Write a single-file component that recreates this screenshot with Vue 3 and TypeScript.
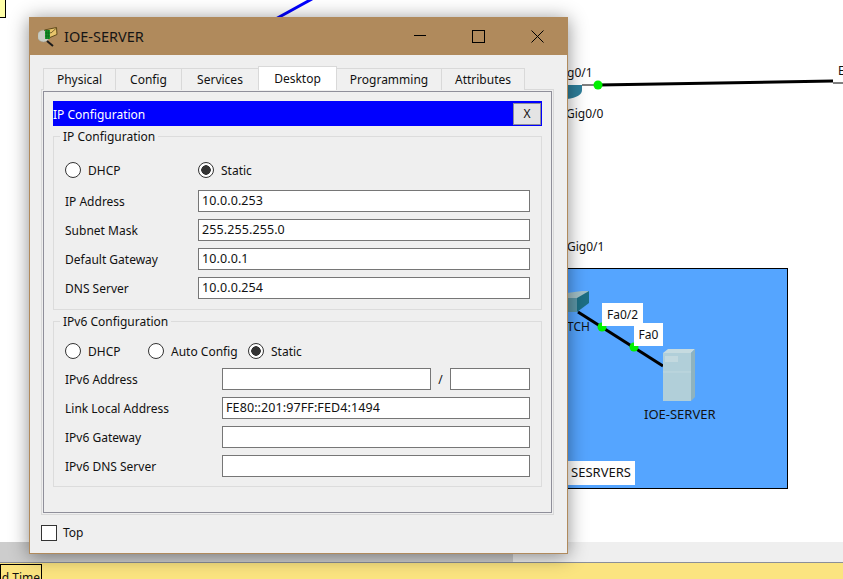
<template>
  <div class="desktop">
    <!-- packet tracer workspace behind the dialog -->
    <div class="note"></div>
    <svg class="links" width="843" height="579">
      <line x1="272" y1="21" x2="312" y2="-1" stroke="#0000ff" stroke-width="3" />
      <path d="M567 85 H582 V90 Q582 97 567 99 Z" fill="#2e7f9b" />
      <line x1="582" y1="85" x2="598" y2="85" stroke="#000" stroke-width="1" />
      <line x1="598" y1="85" x2="833" y2="81" stroke="#000" stroke-width="3" />
      <line x1="833" y1="83" x2="843" y2="83" stroke="#000" stroke-width="1" />
      <circle cx="598" cy="85" r="4.5" fill="#00f000" />
    </svg>
    <span class="canvas-text" style="left: 567px; top: 66px">g0/1</span>
    <span class="canvas-text" style="left: 566px; top: 107px">Gig0/0</span>
    <span class="canvas-text" style="left: 838px; top: 64px">E</span>
    <span class="canvas-text" style="left: 567px; top: 240px">Gig0/1</span>

    <div class="cluster"></div>
    <svg class="links" width="843" height="579">
      <path d="M567 293 L582 291 L589 291 L582 298 L567 298 Z" fill="#a3c0c6" />
      <path d="M567 298 H577 V312 H567 Z" fill="#5d96a6" />
      <path d="M577 298 L589 291 V303 L577 312 Z" fill="#1d6f84" />
      <line x1="578" y1="312" x2="663" y2="366" stroke="#000" stroke-width="3" />
      <circle cx="602" cy="327" r="4.5" fill="#00f000" />
      <circle cx="634" cy="347" r="4.5" fill="#00f000" />
      <path d="M663 353 L668 349 H695 L691 353 Z" fill="#c6dbe0" />
      <path d="M691 353 L695 349 V397 L691 401 Z" fill="#8fb3bf" />
      <rect x="663" y="353" width="28" height="48" fill="#b1cfd9" />
      <rect x="665" y="356" width="13" height="6" fill="#c3d9df" />
      <line x1="663" y1="372" x2="691" y2="372" stroke="#c0d8df" />
    </svg>
    <span class="canvas-text" style="left: 567px; top: 320px">TCH</span>
    <span class="canvas-text tag" style="left: 602px; top: 303px; width: 41px">Fa0/2</span>
    <span class="canvas-text tag" style="left: 634px; top: 323px; width: 29px">Fa0</span>
    <span class="canvas-text wide" style="left: 644px; top: 407px">IOE-SERVER</span>
    <span class="canvas-text tag wide" style="left: 567px; top: 461px; width: 68px; height: 24px">SESRVERS</span>

    <div class="scroll-track"><div class="scroll-thumb"></div></div>
    <div class="status">
      <div class="time-box">d Time</div>
    </div>

    <!-- device dialog -->
    <div class="window">
      <div class="titlebar">
        <svg class="app-icon" width="22" height="22" viewBox="0 0 22 22">
          <circle cx="5.500" cy="11" r="6" fill="#c9cdc4" stroke="#9a9a90" stroke-width="0.5" />
          <path d="M6.500 5 L18.500 2.500 L19 9.500 L12 12.500 Z" fill="#e8c56c" stroke="#5f4a1a" stroke-width="1" />
          <path d="M7 5.500 L13 8 L18.500 3" fill="none" stroke="#5f4a1a" stroke-width="0.8" />
          <rect x="7" y="5" width="5" height="9" fill="#169b2c" />
          <path d="M8.700 5 V14 M10.400 5 V14 M7 8 H12 M7 11 H12" stroke="#0b5a18" stroke-width="0.6" />
          <line x1="9" y1="16" x2="15" y2="21" stroke="#1a1a1a" stroke-width="2" />
        </svg>
        <span class="title">IOE-SERVER</span>
        <div class="win-controls">
          <svg width="12" height="12" viewBox="0 0 12 12"><line x1="0" y1="5.5" x2="12" y2="5.5" stroke="#000" /></svg>
          <svg width="13" height="13" viewBox="0 0 13 13"><rect x="0.5" y="0.5" width="12" height="12" fill="none" stroke="#000" /></svg>
          <svg width="13" height="13" viewBox="0 0 13 13"><path d="M0.5 0.5 L12.5 12.5 M12.5 0.5 L0.5 12.5" stroke="#000" fill="none" /></svg>
        </div>
      </div>

      <div class="tabs">
        <button
          v-for="tab in tabs"
          :key="tab.name"
          type="button"
          class="tab"
          :class="{ active: tab.name === activeTab }"
          :style="{ width: tab.width + 'px' }"
        >
          {{ tab.name }}
        </button>
      </div>

      <div class="pane">
        <div class="pane-inner">
          <div class="panel-head">
            <span>IP Configuration</span>
            <button type="button" class="panel-close">X</button>
          </div>

          <fieldset class="group ipv4">
            <legend>IP Configuration</legend>
            <div class="radios">
              <label class="radio" style="width: 133px"><i></i>DHCP</label>
              <label class="radio"><i class="on"></i>Static</label>
            </div>
            <div v-for="row in ipv4Rows" :key="row.label" class="field">
              <span>{{ row.label }}</span>
              <div class="input">{{ row.value }}</div>
            </div>
          </fieldset>

          <fieldset class="group ipv6">
            <legend>IPv6 Configuration</legend>
            <div class="radios">
              <label class="radio" style="width: 83px"><i></i>DHCP</label>
              <label class="radio" style="width: 100px"><i></i>Auto Config</label>
              <label class="radio"><i class="on"></i>Static</label>
            </div>
            <div class="field">
              <span>IPv6 Address</span>
              <div class="prefix">
                <div class="input"></div>
                <em>/</em>
                <div class="input"></div>
              </div>
            </div>
            <div v-for="row in ipv6Rows" :key="row.label" class="field">
              <span>{{ row.label }}</span>
              <div class="input">{{ row.value }}</div>
            </div>
          </fieldset>
        </div>
      </div>

      <label class="top-check"><i></i>Top</label>
    </div>
  </div>
</template>

<script setup lang="ts">
const activeTab = 'Desktop'

const tabs = [
  { name: 'Physical', width: 73 },
  { name: 'Config', width: 67 },
  { name: 'Services', width: 78 },
  { name: 'Desktop', width: 79 },
  { name: 'Programming', width: 106 },
  { name: 'Attributes', width: 84 },
]

const ipv4Rows = [
  { label: 'IP Address', value: '10.0.0.253' },
  { label: 'Subnet Mask', value: '255.255.255.0' },
  { label: 'Default Gateway', value: '10.0.0.1' },
  { label: 'DNS Server', value: '10.0.0.254' },
]

const ipv6Rows = [
  { label: 'Link Local Address', value: 'FE80::201:97FF:FED4:1494' },
  { label: 'IPv6 Gateway', value: '' },
  { label: 'IPv6 DNS Server', value: '' },
]
</script>

<style>
html,
body {
  margin: 0;
  background: #fff;
}
</style>

<style scoped>
.desktop {
  position: relative;
  width: 843px;
  height: 579px;
  overflow: hidden;
  background: #fff;
  font-family: 'Noto Sans', 'Liberation Sans', sans-serif;
  font-size: 12px;
  color: #111;
}

.note {
  position: absolute;
  left: -1px;
  top: -1px;
  width: 5px;
  height: 17px;
  background: #ffffa8;
  border: 1px solid #000;
}

.links {
  position: absolute;
  left: 0;
  top: 0;
}

.canvas-text {
  position: absolute;
  line-height: 14px;
  white-space: nowrap;
}

.wide {
  font-size: 13px;
}

.tag {
  height: 23px;
  line-height: 23px;
  background: #fff;
  text-align: center;
}

.cluster {
  position: absolute;
  left: 500px;
  top: 268px;
  width: 286px;
  height: 219px;
  background: #55a5ff;
  border: 1px solid #000;
}

.scroll-track {
  position: absolute;
  left: 0;
  top: 542px;
  width: 843px;
  height: 20px;
  background: #efefef;
}

.scroll-thumb {
  width: 513px;
  height: 20px;
  background: #cdcdcd;
}

.status {
  position: absolute;
  left: 0;
  top: 562px;
  width: 843px;
  height: 17px;
  box-sizing: border-box;
  border-top: 1px solid #8b8f98;
  background: #fbe480;
}

.time-box {
  width: 42px;
  height: 20px;
  margin-top: 1px;
  box-sizing: border-box;
  border: 1px solid #000;
  text-align: right;
  padding: 4px 1px 0 0;
  line-height: 17px;
  white-space: nowrap;
  overflow: hidden;
}

.window {
  position: absolute;
  left: 29px;
  top: 17px;
  width: 539px;
  height: 537px;
  box-sizing: border-box;
  border: 1px solid #b08a5c;
  border-top: 0;
  background: #efefef;
  box-shadow: 0 2px 18px rgba(0, 0, 0, 0.45);
}

.titlebar {
  display: flex;
  align-items: center;
  height: 38px;
  margin: 0 -1px;
  padding-left: 9px;
  background: #b08a5c;
}

.app-icon {
  margin-right: 4px;
}

.title {
  font-size: 14.5px;
  color: #151515;
}

.win-controls {
  display: flex;
  align-items: center;
  gap: 46px;
  margin-left: auto;
  margin-right: 24px;
}

.tabs {
  position: relative;
  z-index: 1;
  display: flex;
  align-items: flex-end;
  height: 24px;
  margin: 11px 0 -1px 13px;
}

.tab {
  height: 22px;
  padding: 0;
  box-sizing: border-box;
  border: 1px solid #d9d9d9;
  border-bottom: 0;
  margin-left: -1px;
  background: #f0f0f0;
  font: inherit;
  color: inherit;
}

.tab:first-child {
  margin-left: 0;
}

.tab.active {
  height: 24px;
  background: #fff;
}

.pane {
  width: 513px;
  height: 426px;
  margin-left: 11px;
  padding: 1px;
  box-sizing: border-box;
  border: 1px solid #d9d9d9;
}

.pane-inner {
  height: 100%;
  padding: 9px;
  box-sizing: border-box;
  border: 1px solid #8f8f9a;
}

.panel-head {
  display: flex;
  align-items: center;
  justify-content: space-between;
  height: 25px;
  padding: 2px 1px 0 0;
  box-sizing: border-box;
  background: #0000ff;
  color: #fff;
}

.panel-close {
  width: 28px;
  height: 22px;
  margin-top: -2px;
  padding: 0;
  border: 1px solid #8f8f9a;
  background: #e4e4e4;
  font: inherit;
  color: #111;
}

.group {
  margin: 0;
  padding: 0 11px;
  box-sizing: border-box;
  border: 1px solid #dcdcdc;
  min-width: 0;
}

.group legend {
  padding: 2px 3px 0;
  margin-left: -5px;
  line-height: 16px;
}

.ipv4 {
  height: 183px;
  margin-top: 1px;
}

.ipv6 {
  height: 175px;
  margin-top: 2px;
}

.radios {
  display: flex;
  align-items: center;
  height: 20px;
}

.ipv4 .radios {
  margin: 15px 0 10px;
}

.ipv6 .radios {
  margin: 11px 0 7px;
}

.radio {
  display: flex;
  align-items: center;
  gap: 7px;
}

.radio i {
  width: 16px;
  height: 16px;
  box-sizing: border-box;
  border: 1px solid #333;
  border-radius: 50%;
  background: #fff;
}

.radio i.on {
  background: radial-gradient(circle, #333 0 4.5px, #fff 5px);
}

.field {
  display: grid;
  align-items: center;
  height: 22px;
  margin-bottom: 7px;
}

.ipv4 .field {
  grid-template-columns: 133px 332px;
}

.ipv6 .field {
  grid-template-columns: 157px 308px;
}

.input {
  height: 22px;
  padding-left: 3px;
  box-sizing: border-box;
  border: 1px solid #767676;
  background: #fff;
  font-size: 12.5px;
  letter-spacing: 0.1px;
  line-height: 20px;
}

.prefix {
  display: grid;
  grid-template-columns: 209px 1fr 80px;
  align-items: center;
}

.prefix em {
  font-style: normal;
  text-align: center;
}

.top-check {
  display: flex;
  align-items: center;
  gap: 6px;
  margin: 9px 0 0 11px;
}

.top-check i {
  width: 16px;
  height: 16px;
  box-sizing: border-box;
  border: 1px solid #333;
  background: #fff;
}
</style>
